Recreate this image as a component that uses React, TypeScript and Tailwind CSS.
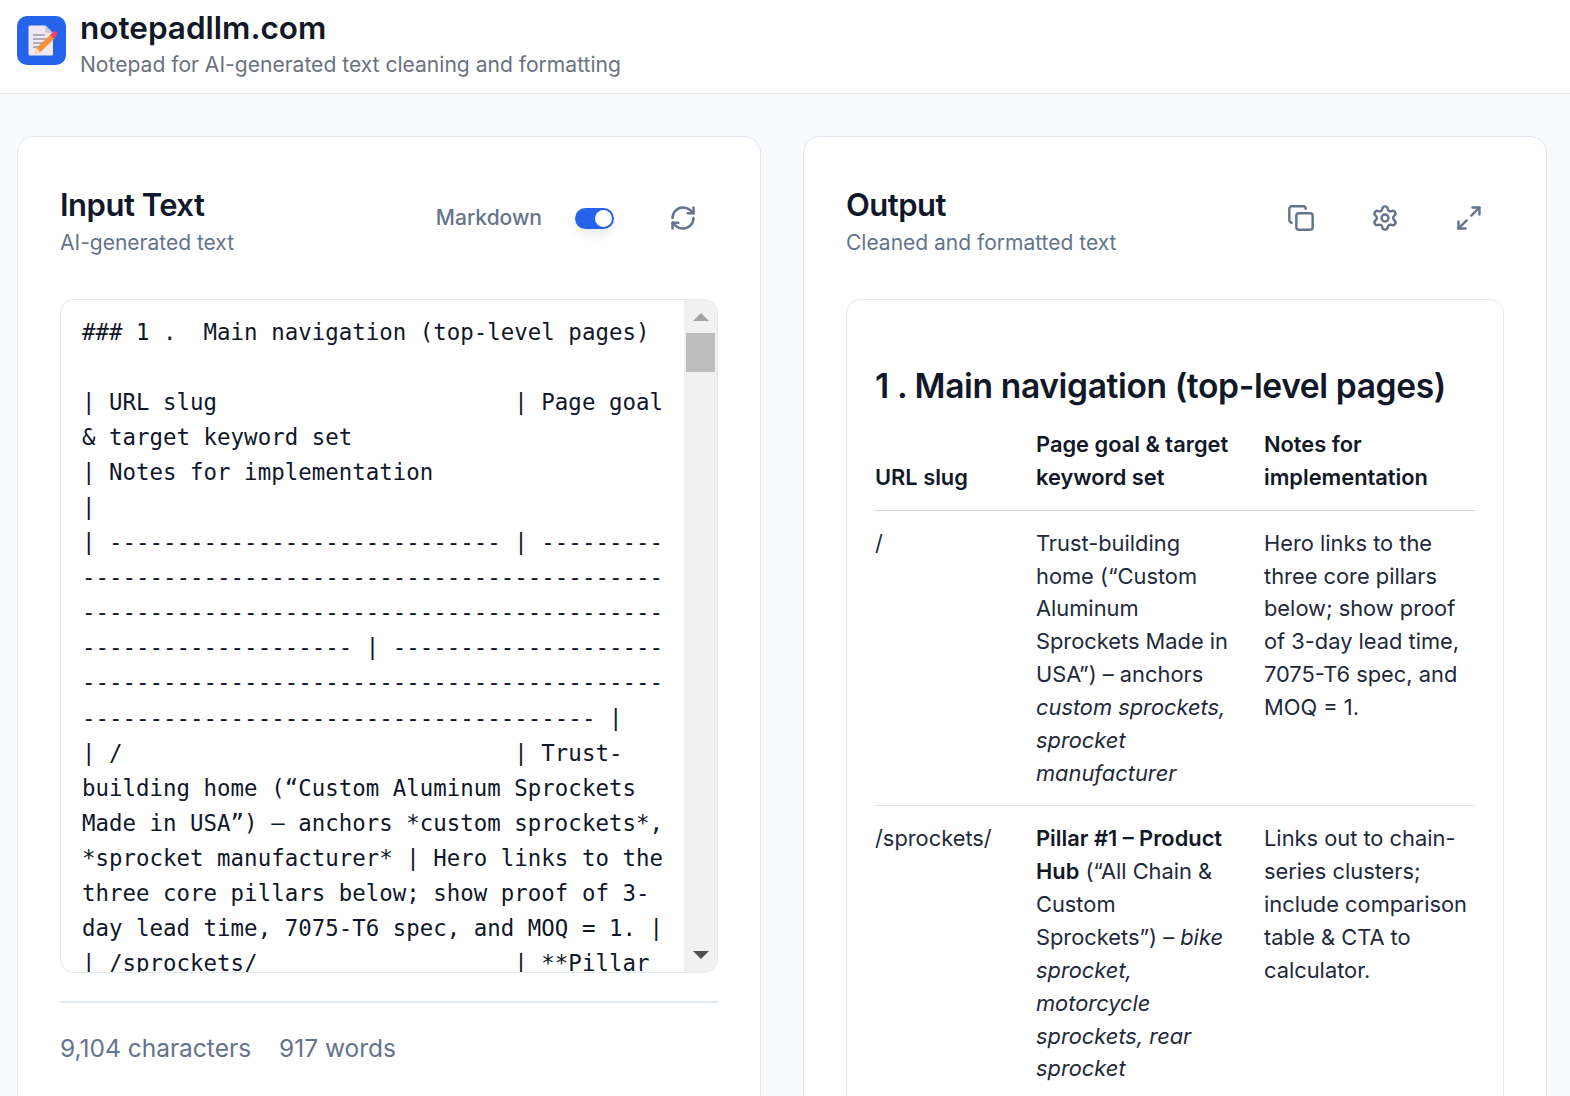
import { Copy, Maximize2, RefreshCw, Settings } from "lucide-react";

const inputLines = [
  "### 1 .  Main navigation (top-level pages)",
  " ",
  "| URL slug                      | Page goal",
  "& target keyword set",
  "| Notes for implementation",
  "|",
  "| ----------------------------- | ---------",
  "-------------------------------------------",
  "-------------------------------------------",
  "-------------------- | --------------------",
  "-------------------------------------------",
  "-------------------------------------- |",
  "| /                             | Trust-",
  "building home (“Custom Aluminum Sprockets",
  "Made in USA”) – anchors *custom sprockets*,",
  "*sprocket manufacturer* | Hero links to the",
  "three core pillars below; show proof of 3-",
  "day lead time, 7075-T6 spec, and MOQ = 1. |",
  "| /sprockets/                   | **Pillar",
];

function Logo() {
  return (
    <div className="flex h-[49px] w-[49px] shrink-0 items-center justify-center rounded-[10px] bg-[#2563eb]">
      <svg width="36" height="36" viewBox="0 0 36 36" aria-hidden="true">
        <path d="M6 3.5h15.5L29 11v21a1.5 1.5 0 0 1-1.5 1.5H6A1.5 1.5 0 0 1 4.5 32V5A1.5 1.5 0 0 1 6 3.500Z" fill="#efe9f3" />
        <path d="M21.500 3.500 29 11h-6a1.500 1.500 0 0 1-1.500-1.500Z" fill="#c9c3d6" />
        <path d="M9 13h12M9 17h14M9 21h11M9 25h6" stroke="#9a96a8" strokeWidth="1.400" />
        <path d="M10.500 32 12.500 26 27 12l4 4-14.500 14Z" fill="#f6933a" />
        <path d="M10.500 32 12.500 26l4 4Z" fill="#f7d9a8" />
        <path d="m26 13 3-3a2.400 2.400 0 0 1 3.500 0 2.400 2.400 0 0 1 0 3.500l-2.500 3Z" fill="#ef3f6b" />
      </svg>
    </div>
  );
}

function Card({ title, subtitle, actions, children }: { title: string; subtitle: string; actions: React.ReactNode; children: React.ReactNode }) {
  return (
    <section className="h-[1000px] w-[744px] shrink-0 rounded-t-[17px] border border-[#e2e8f0] bg-white px-[42px] pt-[42px]">
      <div className="flex h-[120px] items-start justify-between">
        <div>
          <h2 className="mt-[1px] text-[31px] leading-[50px] font-semibold tracking-[-0.5px] text-[#0f172a]">{title}</h2>
          <p className="text-[21px] leading-[26px] text-[#64748b]">{subtitle}</p>
        </div>
        {actions}
      </div>
      {children}
    </section>
  );
}

export default function App() {
  return (
    <div className="h-[1096px] w-full overflow-hidden bg-[#f8fafc] font-['Inter',sans-serif]">
      <header className="flex h-[94px] items-center gap-[14px] border-b border-[#e5e7eb] bg-white pl-[17px]">
        <div className="-mt-[13px]"><Logo /></div>
        <div className="-mt-[3px]">
          <h1 className="text-[31.500px] leading-[37px] font-semibold text-[#111827]">notepadllm.com</h1>
          <p className="mt-[2px] text-[21.070px] leading-[33px] text-[#6b7280]">Notepad for AI-generated text cleaning and formatting</p>
        </div>
      </header>

      <main className="flex gap-[42px] pt-[42px] pl-[17px]">
        <Card
          title="Input Text"
          subtitle="AI-generated text"
          actions={
            <div className="flex h-[78px] items-center">
              <span className="text-[21px] font-medium text-[#64748b]">Markdown</span>
              <span className="ml-[33px] flex h-[21px] w-[39px] items-center justify-end rounded-full bg-[#2563eb] pr-[2px] shadow-[0_6px_10px_rgba(15,23,42,0.08)]">
                <span className="h-[17px] w-[17px] rounded-full bg-white" />
              </span>
              <RefreshCw className="mr-[21px] ml-[55px] h-[28px] w-[28px] text-[#64748b]" strokeWidth={2.1} />
            </div>
          }
        >
          <div className="flex h-[674px] w-[658px] overflow-hidden rounded-[14px] border border-[#e2e8f0] bg-white">
            <div className="w-[624px] overflow-hidden pt-[15px] pl-[21px] font-['DejaVu_Sans_Mono',monospace] text-[22.400px] leading-[35.050px] tracking-[0.03px] whitespace-pre text-[#0f172a]">
              {inputLines.map((line, i) => (
                <div key={i}>{line}</div>
              ))}
            </div>
            <div className="flex w-[33px] shrink-0 flex-col items-center bg-[#f1f1f1] pt-[13px]">
              <div className="h-0 w-0 border-x-[8px] border-b-[8px] border-x-transparent border-b-[#a3a3a3]" />
              <div className="mt-[12px] h-[39px] w-[29px] bg-[#bdbdbd]" />
              <div className="mt-auto mb-[13px] h-0 w-0 border-x-[8px] border-t-[8px] border-x-transparent border-t-[#505050]" />
            </div>
          </div>
          <div className="mt-[28px] flex h-[92px] gap-[28px] border-t-2 border-[#e2e8f0] pt-[26px] text-[24.500px] leading-[38px] text-[#64748b]">
            <span>9,104 characters</span>
            <span>917 words</span>
          </div>
        </Card>

        <Card
          title="Output"
          subtitle="Cleaned and formatted text"
          actions={
            <div className="flex h-[78px] items-center gap-[56px] pr-[21px] text-[#64748b]">
              <Copy className="h-[28px] w-[28px]" strokeWidth={2.1} />
              <Settings className="h-[28px] w-[28px]" strokeWidth={2.1} />
              <Maximize2 className="h-[28px] w-[28px]" strokeWidth={2.1} />
            </div>
          }
        >
          <div className="h-[900px] w-[658px] rounded-t-[14px] border border-[#e2e8f0] bg-white px-[28px] pt-[61px] text-[#1e293b]">
            <h3 className="text-[33.600px] leading-[49px] font-semibold tracking-[-0.38px] text-[#111827]">1 . Main navigation (top-level pages)</h3>
            <table className="mt-[18px] w-[600px] table-fixed border-collapse text-left text-[21.840px] leading-[32.850px]">
              <colgroup>
                <col className="w-[161px]" />
                <col className="w-[228px]" />
                <col className="w-[211px]" />
              </colgroup>
              <thead className="border-b border-[#d1d5db] align-bottom">
                <tr>
                  <th className="pr-[28px] pb-[16px] font-semibold text-[#111827]">URL slug</th>
                  <th className="pr-[28px] pb-[16px] font-semibold text-[#111827]">Page goal &amp; target keyword set</th>
                  <th className="pb-[16px] font-semibold text-[#111827]">Notes for implementation</th>
                </tr>
              </thead>
              <tbody className="align-top">
                <tr className="border-b border-[#e5e7eb]">
                  <td className="py-[16px] pr-[28px]">/</td>
                  <td className="py-[16px] pr-[28px]">
                    Trust-building home (“Custom Aluminum Sprockets Made in USA”) – anchors <em>custom sprockets, sprocket manufacturer</em>
                  </td>
                  <td className="py-[16px]">Hero links to the three core pillars below; show proof of 3-day lead time, 7075-T6 spec, and MOQ = 1.</td>
                </tr>
                <tr>
                  <td className="py-[16px] pr-[28px]">/sprockets/</td>
                  <td className="py-[16px] pr-[28px]">
                    <strong className="font-semibold text-[#111827]">Pillar #1 – Product Hub</strong> (“All Chain &amp; Custom Sprockets”) – <em>bike sprocket, motorcycle sprockets, rear sprocket</em>
                  </td>
                  <td className="py-[16px]">Links out to chain-series clusters; include comparison table &amp; CTA to calculator.</td>
                </tr>
              </tbody>
            </table>
          </div>
        </Card>
      </main>
    </div>
  );
}
